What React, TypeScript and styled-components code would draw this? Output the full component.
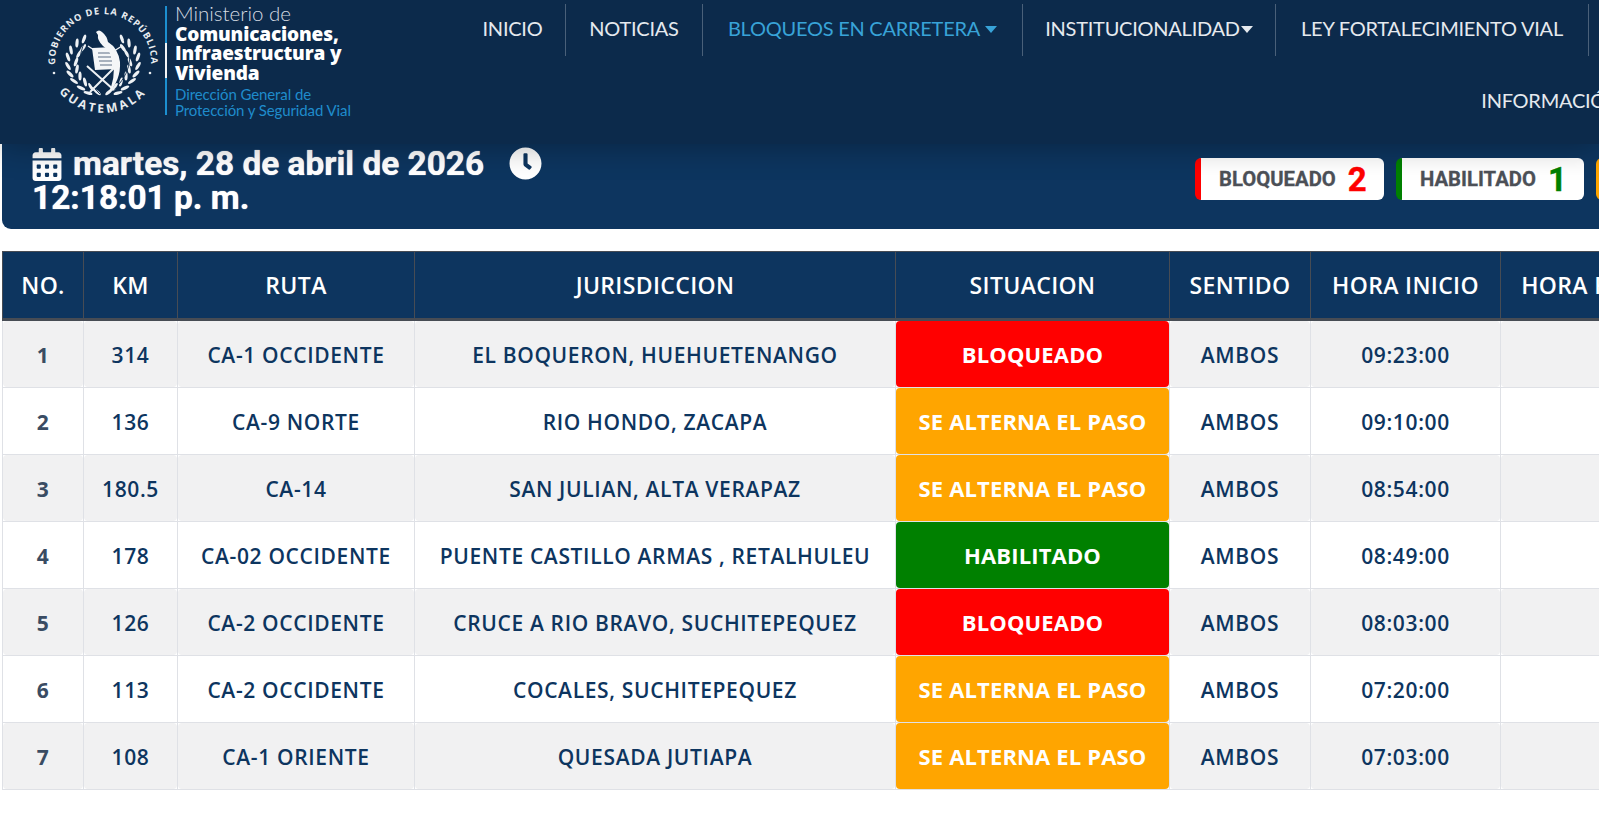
import React from "react";
import styled, { createGlobalStyle } from "styled-components";
import { FaCalendarAlt, FaClock } from "react-icons/fa";

const Global = createGlobalStyle`
  html, body { margin: 0; padding: 0; background: #fff; overflow: hidden; height: 100%; }
  body { font-family: "Open Sans", "Liberation Sans", sans-serif; }
`;

const Page = styled.div`
  width: 1599px;
  height: 823px;
  overflow: hidden;
  background: #fff;
`;

const Header = styled.header`
  position: relative;
  z-index: 2;
  display: flex;
  height: 144px;
  width: 1599px;
  overflow: hidden;
  background: #0c2a4b;
  box-shadow: 0 4px 28px rgba(0, 0, 0, 0.28);
  clip-path: inset(0 0 -40px 0);
`;

const LogoBlock = styled.div`
  flex: 0 0 460px;
  display: flex;
  align-items: flex-start;
  padding-left: 44px;
  box-sizing: border-box;
`;

const Seal = styled.svg`
  flex: 0 0 116px;
  width: 116px;
  height: 120px;
`;

const LogoDivider = styled.div`
  flex: 0 0 2px;
  width: 2px;
  height: 109px;
  margin: 6px 0 0 5px;
  background: linear-gradient(#1c8fd0 0 34%, #f2f4f6 34% 66%, #1c8fd0 66%);
`;

const LogoText = styled.div`
  margin: 2px 0 0 8px;
  white-space: nowrap;
`;

const LogoLight = styled.div`
  font: 300 20.5px/23px Lato, sans-serif;
  color: #d5dbe2;
`;

const LogoBold = styled.div`
  font: 800 19px/19.3px "Open Sans", sans-serif;
  color: #fff;
  letter-spacing: -0.15px;
`;

const LogoBlue = styled.div`
  font: 400 15px/16px Lato, sans-serif;
  color: #1f8ccc;
  letter-spacing: -0.1px;
`;

const BlueGroup = styled.div`
  margin-top: 3px;
`;

const Nav = styled.nav`
  flex: 1;
  display: flex;
  flex-direction: column;
  min-width: 0;
`;

const NavRow = styled.div<{ $indent?: number }>`
  display: flex;
  height: 52px;
  margin-top: 4px;
  margin-left: ${(p) => p.$indent ?? 0}px;
  white-space: nowrap;
`;

const SecondNavRow = styled(NavRow)`
  margin-top: 20px;
`;

const NavItem = styled.a<{ $w: number; $active?: boolean; $last?: boolean }>`
  flex: 0 0 ${(p) => p.$w}px;
  box-sizing: border-box;
  display: flex;
  align-items: center;
  justify-content: center;
  height: 52px;
  padding-bottom: 4px;
  font: 400 20px/1 Lato, sans-serif;
  letter-spacing: -0.25px;
  color: ${(p) => (p.$active ? "#38a3d8" : "#e5e9ee")};
  border-right: ${(p) => (p.$last ? "0" : "1px solid #4a6079")};
`;

const Caret = styled.span`
  display: inline-block;
  width: 0;
  height: 0;
  margin-left: 5px;
  margin-top: 2px;
  border-left: 6px solid transparent;
  border-right: 6px solid transparent;
  border-top: 7px solid currentColor;
`;

const TightCaret = styled(Caret)`
  margin-left: 1px;
`;

const Banner = styled.section`
  display: flex;
  width: 1700px;
  height: 85px;
  margin-left: 2px;
  box-sizing: border-box;
  background: #0d355f;
  border-bottom-left-radius: 9px;
`;

const DateBlock = styled.div`
  flex: 0 0 1193px;
  box-sizing: border-box;
  padding: 3px 0 0 30px;
  color: #fff;
  font: 700 33.4px/34px Roboto, sans-serif;
  text-shadow: 0 0 1px #fff;
`;

const DateRow = styled.div`
  display: flex;
  align-items: center;
`;

const CalendarIcon = styled(FaCalendarAlt)`
  width: 30px;
  height: 33px;
  margin-right: 11px;
`;

const ClockIcon = styled(FaClock)`
  width: 33px;
  height: 33px;
  margin-left: 25px;
  margin-top: -2px;
`;

const Badges = styled.div`
  display: flex;
  gap: 12px;
  padding-top: 14px;
`;

const Badge = styled.div<{ $color: string; $w: number }>`
  flex: 0 0 ${(p) => p.$w}px;
  box-sizing: border-box;
  height: 42px;
  display: flex;
  align-items: center;
  padding-left: 18px;
  background: #fff;
  border-left: 6px solid ${(p) => p.$color};
  border-radius: 6px;
  font: 700 20.3px/1 Roboto, sans-serif;
  color: #4c5057;
  -webkit-text-stroke: 0.3px #4c5057;
`;

const BadgeCount = styled.span<{ $color: string }>`
  margin-left: 12px;
  font: 700 33px/1 Roboto, sans-serif;
  color: ${(p) => p.$color};
  -webkit-text-stroke: 0.4px ${(p) => p.$color};
`;

const Table = styled.table`
  display: table;
  table-layout: fixed;
  width: 1700px;
  margin: 22px 0 0 2px;
  border-collapse: separate;
  border-spacing: 0;
`;

const Th = styled.th<{ $w: number }>`
  width: ${(p) => p.$w}px;
  height: 70px;
  box-sizing: border-box;
  padding: 1px 0 0;
  background: #0d355f;
  color: #fff;
  font: 600 23px/1 "Open Sans", sans-serif;
  letter-spacing: 0.35px;
  white-space: nowrap;
  border-top: 1px solid #474c54;
  border-right: 1px solid #474c54;
  border-bottom: 3px solid #474c54;
  &:first-child { border-left: 1px solid #474c54; }
`;

const Tr = styled.tr`
  height: 67px;
`;

const Td = styled.td`
  box-sizing: border-box;
  padding: 0;
  border-right: 1px solid #dfe1e6;
  border-bottom: 1px solid #dfe1e6;
  &:first-child { border-left: 1px solid #dfe1e6; }
`;

const Fill = styled.div<{ $bg: string }>`
  box-sizing: border-box;
  height: 66px;
  padding-top: 2px;
  display: flex;
  align-items: center;
  justify-content: center;
  white-space: nowrap;
  background: ${(p) => p.$bg};
  border-radius: 4px;
  color: #0d355f;
  font: 600 21px/1 "Open Sans", sans-serif;
  letter-spacing: 0.65px;
`;

const NumFill = styled(Fill)`
  font-weight: 700;
  color: #3a4c63;
`;

const StatusFill = styled(Fill)`
  padding-top: 0;
  color: #fff;
  font: 700 22px/1 "Open Sans", sans-serif;
  letter-spacing: 0.15px;
`;

const SCol = ["#ff0000", "#ffa500", "#008000"];
const rows: [number, string, string, string, number, string][] = [
  [1, "314", "CA-1 OCCIDENTE", "EL BOQUERON, HUEHUETENANGO", 0, "09:23:00"],
  [2, "136", "CA-9 NORTE", "RIO HONDO, ZACAPA", 1, "09:10:00"],
  [3, "180.5", "CA-14", "SAN JULIAN, ALTA VERAPAZ", 1, "08:54:00"],
  [4, "178", "CA-02 OCCIDENTE", "PUENTE CASTILLO ARMAS , RETALHULEU", 2, "08:49:00"],
  [5, "126", "CA-2 OCCIDENTE", "CRUCE A RIO BRAVO, SUCHITEPEQUEZ", 0, "08:03:00"],
  [6, "113", "CA-2 OCCIDENTE", "COCALES, SUCHITEPEQUEZ", 1, "07:20:00"],
  [7, "108", "CA-1 ORIENTE", "QUESADA JUTIAPA", 1, "07:03:00"],
];
const statusText = ["BLOQUEADO", "SE ALTERNA EL PASO", "HABILITADO"];
const heads: [string, number][] = [
  ["NO.", 82], ["KM", 94], ["RUTA", 237], ["JURISDICCION", 481], ["SITUACION", 274],
  ["SENTIDO", 141], ["HORA INICIO", 190], ["HORA FINAL", 181], ["", 20],
];

const leaves = [
  [40, 35, 20], [33, 39, 5], [39, 44, 35], [27, 46, -10], [35, 50, 30], [24, 53, -20],
  [32, 58, 20], [24, 62, -30], [33, 65, 10], [26, 70, -45], [36, 72, 0], [30, 77, -55],
  [41, 78, -15], [37, 84, -65], [47, 83, -30], [44, 89, -75], [53, 88, -50],
];

function Emblem() {
  return (
    <Seal viewBox="0 0 116 120">
      <defs>
        <path id="sealTop" d="M11 62 A48 48 0 0 1 107 62" />
        <path id="sealBottom" d="M5 74 A57 57 0 0 0 113 74" />
      </defs>
      <text fill="#e8ecf0" fontFamily="Open Sans, sans-serif" fontWeight="700" fontSize="9.3" letterSpacing="1">
        <textPath href="#sealTop" startOffset="50%" textAnchor="middle">GOBIERNO DE LA REPÚBLICA</textPath>
      </text>
      <text fill="#e8ecf0" fontFamily="Open Sans, sans-serif" fontWeight="700" fontSize="12" letterSpacing="2.9">
        <textPath href="#sealBottom" startOffset="50%" textAnchor="middle">GUATEMALA</textPath>
      </text>
      <circle cx="10" cy="73" r="1.3" fill="#e8ecf0" />
      <circle cx="106" cy="73" r="1.3" fill="#e8ecf0" />
      <g transform="translate(2 4)">
        <g fill="#eef1f4">
          {leaves.map(([x, y, r], i) => (
            <React.Fragment key={i}>
              <ellipse cx={x - 2} cy={y} rx="1.6" ry="4.6" transform={`rotate(${r} ${x - 2} ${y})`} />
              <ellipse cx={118 - x - 2} cy={y} rx="1.6" ry="4.6" transform={`rotate(${-r} ${118 - x - 2} ${y})`} />
            </React.Fragment>
          ))}
        </g>
        <path d="M40 36 Q24 62 54 90 M78 36 Q94 62 64 90" fill="none" stroke="#0c2a4b" strokeWidth="0.9" />
        <path d="M41 62 L68 86 M70 62 L44 88" stroke="#eef1f4" strokeWidth="2" fill="none" />
        <path d="M46 44 L68 43 L71 65 L49 66 Z" fill="#f4f6f8" />
        <path d="M52 49 H64 M52 53 H65 M53 57 H66 M54 61 H66" stroke="#5a6d84" strokeWidth="1.1" />
        <path d="M50 28 Q53 25 56 28 Q61 32 62 38 Q72 44 74 58 Q75 76 62 90 Q70 74 67 58 Q65 47 57 42 Q51 36 52 31 Z" fill="#f4f6f8" />
        <path d="M42 42 L48 46 M76 42 L68 47" stroke="#eef1f4" strokeWidth="1.4" />
      </g>
    </Seal>
  );
}

export default function App() {
  return (
    <Page>
      <Global />
      <Header>
        <LogoBlock>
          <Emblem />
          <LogoDivider />
          <LogoText>
            <LogoLight>Ministerio de</LogoLight>
            <LogoBold>Comunicaciones,</LogoBold>
            <LogoBold>Infraestructura y</LogoBold>
            <LogoBold>Vivienda</LogoBold>
            <BlueGroup>
              <LogoBlue>Dirección General de</LogoBlue>
              <LogoBlue>Protección y Seguridad Vial</LogoBlue>
            </BlueGroup>
          </LogoText>
        </LogoBlock>
        <Nav>
          <NavRow>
            <NavItem $w={106}>INICIO</NavItem>
            <NavItem $w={137}>NOTICIAS</NavItem>
            <NavItem $w={320} $active>BLOQUEOS EN CARRETERA<Caret /></NavItem>
            <NavItem $w={253}>INSTITUCIONALIDAD<TightCaret /></NavItem>
            <NavItem $w={313}>LEY FORTALECIMIENTO VIAL</NavItem>
          </NavRow>
          <SecondNavRow $indent={1014}>
            <NavItem $w={240} $last>INFORMACIÓN PÚBLICA</NavItem>
          </SecondNavRow>
        </Nav>
      </Header>
      <Banner>
        <DateBlock>
          <DateRow>
            <CalendarIcon />
            martes, 28 de abril de 2026
            <ClockIcon />
          </DateRow>
          12:18:01 p. m.
        </DateBlock>
        <Badges>
          <Badge $color="#ff0000" $w={189}>BLOQUEADO<BadgeCount $color="#ff0000">2</BadgeCount></Badge>
          <Badge $color="#008000" $w={188}>HABILITADO<BadgeCount $color="#008000">1</BadgeCount></Badge>
          <Badge $color="#ffa500" $w={260}>SE ALTERNA EL PASO<BadgeCount $color="#ffa500">4</BadgeCount></Badge>
        </Badges>
      </Banner>
      <Table>
        <thead>
          <tr>
            {heads.map(([h, w]) => (
              <Th key={h + w} $w={w}>{h}</Th>
            ))}
          </tr>
        </thead>
        <tbody>
          {rows.map(([n, km, ruta, jur, s, hora]) => {
            const bg = n % 2 === 1 ? "#f1f1f2" : "#fff";
            return (
              <Tr key={n}>
                <Td><NumFill $bg={bg}>{n}</NumFill></Td>
                <Td><Fill $bg={bg}>{km}</Fill></Td>
                <Td><Fill $bg={bg}>{ruta}</Fill></Td>
                <Td><Fill $bg={bg}>{jur}</Fill></Td>
                <Td><StatusFill $bg={SCol[s]}>{statusText[s]}</StatusFill></Td>
                <Td><Fill $bg={bg}>AMBOS</Fill></Td>
                <Td><Fill $bg={bg}>{hora}</Fill></Td>
                <Td><Fill $bg={bg} /></Td>
                <Td><Fill $bg={bg} /></Td>
              </Tr>
            );
          })}
        </tbody>
      </Table>
    </Page>
  );
}
